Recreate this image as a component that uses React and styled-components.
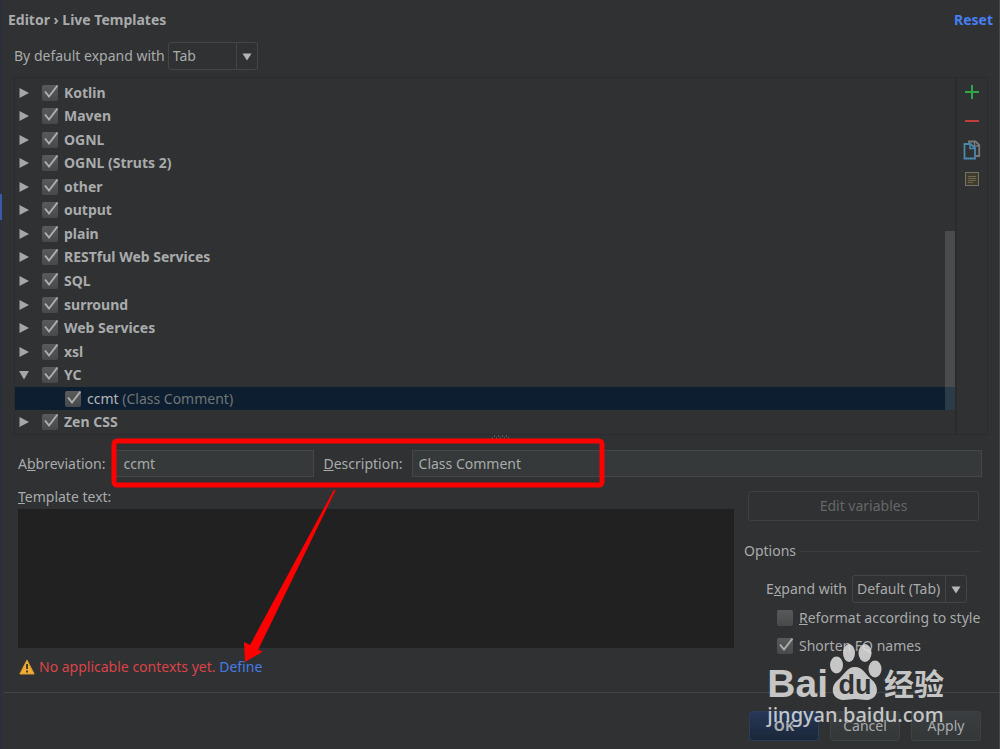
import React, { useState } from 'react';
import styled, { createGlobalStyle } from 'styled-components';

const groups = [
  { name: 'Kotlin' },
  { name: 'Maven' },
  { name: 'OGNL' },
  { name: 'OGNL (Struts 2)' },
  { name: 'other' },
  { name: 'output' },
  { name: 'plain' },
  { name: 'RESTful Web Services' },
  { name: 'SQL' },
  { name: 'surround' },
  { name: 'Web Services' },
  { name: 'xsl' },
  { name: 'YC', items: [{ name: 'ccmt', description: 'Class Comment' }] },
  { name: 'Zen CSS' },
];

function Check({ id, checked }) {
  return (
    <CheckBox>
      <CheckInput type="checkbox" id={id} defaultChecked={checked} />
      <Tick viewBox="0 0 18 18" aria-hidden="true">
        <path d="M3 7.5 L7 12.5 L15.5 1.5" />
      </Tick>
    </CheckBox>
  );
}

function Dropdown({ id, options, width }) {
  return (
    <SelectBox $width={width}>
      <Select id={id}>
        {options.map((option) => (
          <option key={option}>{option}</option>
        ))}
      </Select>
      <SelectArrow viewBox="0 0 10 8" aria-hidden="true">
        <path d="M0.5 0.5 H9.5 L5 7.5 Z" />
      </SelectArrow>
    </SelectBox>
  );
}

function Group({ group }) {
  const [open, setOpen] = useState(Boolean(group.items));

  return (
    <>
      <Row>
        <ToggleBtn aria-label={`Toggle ${group.name}`} onClick={() => setOpen(!open)}>
          <svg width="10" height="10" viewBox="0 0 10 10">
            <path d={open ? 'M0 1 H10 L5 9.5 Z' : 'M0.5 0 L10 5 L0.5 10 Z'} />
          </svg>
        </ToggleBtn>
        <Check id={`group-${group.name}`} checked />
        <GroupLabel htmlFor={`group-${group.name}`}>{group.name}</GroupLabel>
      </Row>
      {open &&
        group.items?.map((item) => (
          <Row key={item.name} $nested $selected>
            <Check id={`item-${item.name}`} checked />
            <ItemLabel htmlFor={`item-${item.name}`}>
              {item.name} <Muted>({item.description})</Muted>
            </ItemLabel>
          </Row>
        ))}
    </>
  );
}

function Watermark() {
  return (
    <WatermarkDiv>
      <Brand>
        <BrandText>Bai</BrandText>
        <Paw viewBox="0 0 54 58" aria-hidden="true">
          <ellipse cx="8.5" cy="22" rx="6.5" ry="8.5" />
          <ellipse cx="21" cy="10" rx="6" ry="9" />
          <ellipse cx="37" cy="10" rx="6.5" ry="9" />
          <ellipse cx="47" cy="26" rx="6.5" ry="8.5" />
          <path d="M27 24 C35 24 37 31 43 36 C52 43 51 56 39 57 C34 57 31 56 27 56 C23 56 20 57 15 57 C3 56 2 43 10 37 C16 32 19 24 27 24 Z" />
          <text x="27" y="51" textAnchor="middle">du</text>
        </Paw>
        <BrandChinese>经验</BrandChinese>
      </Brand>
      <Domain>jingyan.baidu.com</Domain>
    </WatermarkDiv>
  );
}

function App() {
  return (
    <Page>
      <GlobalStyle />
      <Main>
        <Header>
          <Title>Editor › Live Templates</Title>
          <ResetLink href="#reset">Reset</ResetLink>
        </Header>
        <ExpandRow>
          <label htmlFor="expand">By default expand with</label>
          <Dropdown id="expand" options={['Tab', 'Enter', 'Space']} width={90} />
        </ExpandRow>

        <Panel>
          <Tree>
            {groups.map((group) => (
              <Group key={group.name} group={group} />
            ))}
            <ScrollThumb />
          </Tree>
          <Toolbar>
            <ToolBtn aria-label="Add">
              <svg width="16" height="16" viewBox="0 0 16 16">
                <path d="M8 1 V15 M1 8 H15" stroke="#2fa84a" strokeWidth="2" />
              </svg>
            </ToolBtn>
            <ToolBtn aria-label="Remove">
              <svg width="16" height="16" viewBox="0 0 16 16">
                <path d="M1 8 H15" stroke="#c03d38" strokeWidth="2" />
              </svg>
            </ToolBtn>
            <ToolBtn aria-label="Duplicate">
              <svg width="18" height="20" viewBox="0 0 18 20" fill="none">
                <path d="M6 4 V1.5 H12.5 L16.2 5 V16 H12.5" stroke="#77797b" strokeWidth="1.8" />
                <path d="M11.5 1.5 V6 H16" stroke="#77797b" strokeWidth="1.4" />
                <path d="M1.5 4 H7.5 L12 8 V18.5 H1.5 Z" fill="#2f3132" stroke="#4a88ad" strokeWidth="1.8" />
                <path d="M7 4 V8.5 H12" stroke="#4a88ad" strokeWidth="1.6" />
              </svg>
            </ToolBtn>
            <ToolBtn aria-label="Restore defaults">
              <svg width="14" height="14" viewBox="0 0 14 14">
                <rect x="0.5" y="0.5" width="13" height="13" fill="#403c2c" stroke="#74736c" />
                <path d="M3 4.5 H11 M3 6.5 H11 M3 8.5 H11 M3 10.5 H8" stroke="#7d7558" strokeWidth="0.8" />
              </svg>
            </ToolBtn>
          </Toolbar>
        </Panel>

        <Splitter>
          <svg width="18" height="4" viewBox="0 0 18 4" aria-hidden="true">
            <path d="M2 1 h1 m3 0 h1 m3 0 h1 m3 0 h1 m3 0 h1 M0 3 h1 m3 0 h1 m3 0 h1 m3 0 h1 m3 0 h1" stroke="#7d7f80" />
          </svg>
        </Splitter>

        <Fields>
          <FieldLabel htmlFor="abbreviation">
            A<u>b</u>breviation:
          </FieldLabel>
          <ShortInput id="abbreviation" type="text" defaultValue="ccmt" />
          <FieldLabel htmlFor="description">
            <u>D</u>escription:
          </FieldLabel>
          <TextInput id="description" type="text" defaultValue="Class Comment" />
        </Fields>

        <Details>
          <TemplateColumn>
            <label htmlFor="template">
              <u>T</u>emplate text:
            </label>
            <TemplateText id="template" />
            <Warning>
              <svg width="16" height="16" viewBox="0 0 16 16" aria-hidden="true">
                <path d="M8 1 L15.2 15 H0.8 Z" fill="#f0ac35" stroke="#d89a30" strokeLinejoin="round" />
                <path d="M8 5 V10 M8 11.5 V13.5" stroke="#3a3222" strokeWidth="1.8" />
              </svg>
              <span>
                No applicable contexts yet. <DefineLink href="#define">Define</DefineLink>
              </span>
            </Warning>
          </TemplateColumn>
          <OptionsColumn>
            <EditBtn disabled>Edit variables</EditBtn>
            <OptionsGroup>
              <Legend>Options</Legend>
              <OptionRow>
                <label htmlFor="expandWith">
                  E<u>x</u>pand with
                </label>
                <Dropdown id="expandWith" options={['Default (Tab)', 'Tab', 'Enter']} width={115} />
              </OptionRow>
              <OptionCheck>
                <Check id="reformat" />
                <label htmlFor="reformat">
                  <u>R</u>eformat according to style
                </label>
              </OptionCheck>
              <OptionCheck>
                <Check id="shorten" checked />
                <label htmlFor="shorten">Shorten FQ names</label>
              </OptionCheck>
            </OptionsGroup>
          </OptionsColumn>
        </Details>
      </Main>

      <Footer>
        <FooterBtn $primary>OK</FooterBtn>
        <FooterBtn>Cancel</FooterBtn>
        <FooterBtn>Apply</FooterBtn>
      </Footer>

      <SideMarker />
      <Annotation viewBox="0 0 500 230" aria-hidden="true">
        <rect x="7" y="3" width="488" height="44" rx="3" />
        <path d="M227 51.5 L228.5 52.5 L151 212 L156 213.5 L138 224 L137 204 L143 207 Z" />
      </Annotation>
      <Watermark />
    </Page>
  );
}

export default App;

const GlobalStyle = createGlobalStyle`
  * {
    box-sizing: border-box;
  }

  body {
    margin: 0;
    background: #2f3132;
    color: #a9abac;
    font-family: "Noto Sans", "Noto Sans CJK SC", sans-serif;
    font-size: 14px;
    line-height: 20px;
  }

  button, input, select, textarea {
    margin: 0;
    color: inherit;
    font: inherit;
  }

  a {
    text-decoration: none;
  }
`;

const Page = styled.div`
  position: relative;
  display: flex;
  flex-direction: column;
  min-height: 100vh;
  border-left: 3px solid #2c3038;
  border-right: 1px solid #454749;
`;

const Main = styled.main`
  flex: 1;
  padding: 10px 11px 0;
`;

const Header = styled.header`
  display: flex;
  justify-content: space-between;
  margin: 0 -5px 0 -6px;
`;

const Title = styled.h1`
  margin: 0;
  font-size: 14px;
  font-weight: 700;
`;

const ResetLink = styled.a`
  color: #467ff2;
  font-weight: 700;
`;

const ExpandRow = styled.div`
  display: flex;
  align-items: center;
  gap: 3px;
  margin-top: 12px;
`;

const SelectBox = styled.div`
  position: relative;
  width: ${({ $width }) => $width}px;
  height: 28px;
`;

const Select = styled.select`
  width: 100%;
  height: 100%;
  padding: 0 22px 0 4px;
  appearance: none;
  border: 1px solid #434547;
  border-radius: 3px;
  background: linear-gradient(#434547, #434547) right 20px top / 1px 100% no-repeat;
`;

const SelectArrow = styled.svg`
  position: absolute;
  top: 11px;
  right: 6px;
  width: 10px;
  height: 8px;
  fill: #b4b6b7;
  pointer-events: none;
`;

const Panel = styled.section`
  display: flex;
  margin-top: 7px;
  border: 1px solid #2a2b2c;
`;

const Tree = styled.ul`
  position: relative;
  flex: 1;
  display: grid;
  grid-auto-rows: 1fr;
  height: 356px;
  margin: 0;
  padding: 3px 0 0;
  border-right: 2px solid #2a2b2c;
  list-style: none;
`;

const Row = styled.li`
  display: flex;
  align-items: center;
  padding-left: ${({ $nested }) => ($nested ? 50 : 4)}px;
  background: ${({ $selected }) => ($selected ? '#0c1e2f' : 'transparent')};
`;

const ToggleBtn = styled.button`
  display: flex;
  width: 10px;
  margin-right: 13px;
  padding: 0;
  border: none;
  background: none;
  fill: #a4a6a7;
`;

const GroupLabel = styled.label`
  margin-left: 6px;
  font-weight: 700;
`;

const ItemLabel = styled.label`
  margin-left: 6px;
  color: #b4b6b7;
`;

const Muted = styled.span`
  color: #727577;
`;

const CheckBox = styled.span`
  position: relative;
  display: flex;
`;

const CheckInput = styled.input`
  width: 16px;
  height: 16px;
  appearance: none;
  border-radius: 2px;
  background: linear-gradient(#595a5b, #48494a);
`;

const Tick = styled.svg`
  position: absolute;
  top: -1px;
  left: 0;
  width: 18px;
  height: 18px;
  fill: none;
  stroke: #acaeaf;
  stroke-width: 2;
  pointer-events: none;
  visibility: hidden;

  ${CheckInput}:checked + & {
    visibility: visible;
  }
`;

const ScrollThumb = styled.div`
  position: absolute;
  right: 0;
  top: 153px;
  width: 10px;
  height: 179px;
  background: rgba(255, 255, 255, 0.13);
`;

const Toolbar = styled.div`
  display: flex;
  flex-direction: column;
  align-items: center;
  gap: 1px;
  width: 30px;
`;

const ToolBtn = styled.button`
  display: flex;
  justify-content: center;
  align-items: center;
  width: 28px;
  height: 28px;
  padding: 0;
  border: none;
  background: none;
`;

const Splitter = styled.div`
  display: flex;
  justify-content: center;
  height: 4px;
`;

const Fields = styled.div`
  display: flex;
  align-items: center;
  margin: 11px 6px 0 4px;
`;

const FieldLabel = styled.label`
  margin-right: 9px;
`;

const TextInput = styled.input`
  flex: 1;
  min-width: 0;
  height: 27px;
  padding: 0 6px;
  border: 1px solid #434747;
  background: #353939;
`;

const ShortInput = styled(TextInput)`
  flex: 0 1 200px;
  margin-right: 9px;
  padding: 0 8px;
`;

const Details = styled.div`
  display: flex;
  gap: 10px;
  margin: 10px 7px 0 4px;
`;

const TemplateColumn = styled.div`
  flex: 1;
  display: flex;
  flex-direction: column;
`;

const TemplateText = styled.textarea`
  height: 139px;
  margin-top: 2px;
  border: none;
  background: #212121;
  resize: none;
`;

const Warning = styled.p`
  display: flex;
  align-items: center;
  gap: 4px;
  margin: 9px 0 0 1px;
  color: #dc4348;
`;

const DefineLink = styled.a`
  color: #467be6;
`;

const OptionsColumn = styled.div`
  width: 237px;
  padding-top: 4px;
`;

const EditBtn = styled.button`
  display: block;
  width: 231px;
  height: 30px;
  margin-left: 4px;
  border: 1px solid #3e4042;
  border-radius: 3px;
  background: none;
  color: #656768;
`;

const OptionsGroup = styled.fieldset`
  margin: 20px 0 0;
  padding: 0;
  border: none;
`;

const Legend = styled.legend`
  display: flex;
  align-items: center;
  gap: 4px;
  width: 100%;
  padding: 0;

  &::after {
    content: "";
    flex: 1;
    height: 1px;
    background: #3a3c3d;
  }
`;

const OptionRow = styled.div`
  display: flex;
  justify-content: flex-end;
  align-items: center;
  gap: 5px;
  margin: 14px 14px 5px 0;
`;

const OptionCheck = styled.div`
  display: flex;
  align-items: center;
  gap: 6px;
  margin: 0 0 8px 33px;
  white-space: nowrap;
`;

const Footer = styled.footer`
  display: flex;
  justify-content: flex-end;
  gap: 11px;
  height: 57px;
  padding: 18px 18px 0 0;
  border-top: 1px solid #434546;
`;

const FooterBtn = styled.button`
  width: 70px;
  height: 30px;
  padding: 0;
  border: 1px solid ${({ $primary }) => ($primary ? '#2c3d5a' : '#3d4243')};
  border-radius: 3px;
  background: ${({ $primary }) =>
    $primary ? 'linear-gradient(#263757, #1b2739)' : 'linear-gradient(#3a3e40, #333738)'};
  font-weight: ${({ $primary }) => ($primary ? 700 : 400)};
`;

// Edge of the selected item in the settings list on the left
const SideMarker = styled.div`
  position: absolute;
  top: 194px;
  left: -3px;
  width: 2px;
  height: 26px;
  background: #3c5aa8;
`;

const Annotation = styled.svg`
  position: absolute;
  top: 438px;
  left: 104px;
  width: 500px;
  height: 230px;
  pointer-events: none;

  rect {
    fill: none;
    stroke: #ff0000;
    stroke-width: 5;
  }

  path {
    fill: #ff0000;
  }
`;

const WatermarkDiv = styled.div`
  position: absolute;
  right: 55px;
  bottom: 20px;
  color: rgba(225, 225, 225, 0.85);
  pointer-events: none;
`;

const Brand = styled.div`
  display: flex;
  align-items: flex-end;
  height: 58px;
`;

const BrandText = styled.span`
  font-family: "Liberation Sans", sans-serif;
  font-size: 39px;
  font-weight: 700;
  line-height: 34px;
`;

const BrandChinese = styled.span`
  margin-left: 2px;
  font-family: "Noto Sans CJK SC", sans-serif;
  font-size: 30px;
  font-weight: 700;
  line-height: 38px;
`;

const Paw = styled.svg`
  width: 54px;
  height: 58px;
  fill: currentColor;

  text {
    fill: #2f3132;
    font-family: "Liberation Sans", sans-serif;
    font-size: 27px;
    font-weight: 700;
  }
`;

const Domain = styled.div`
  font-size: 20px;
  font-weight: 500;
  line-height: 28px;
`;
